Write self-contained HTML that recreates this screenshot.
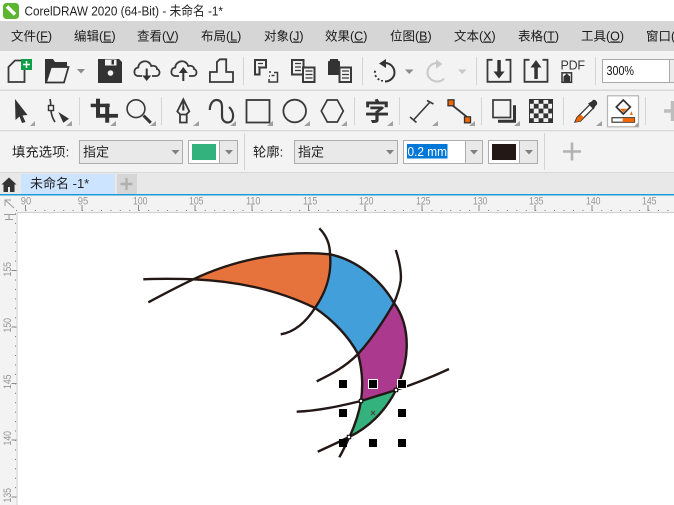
<!DOCTYPE html>
<html lang="zh-CN"><head><meta charset="utf-8"><title>CorelDRAW 2020</title>
<style>
html,body{margin:0;padding:0;width:674px;height:505px;overflow:hidden;background:#fff}
svg{display:block;position:absolute;left:0;top:0}
text{font-family:"Liberation Sans","Noto Sans CJK SC",sans-serif;fill:#1a1a1a}
.m{font-size:12.5px}
.r{font-size:11px;fill:#969696}
.i{fill:none;stroke:#3a3a3a;stroke-width:1.8}
.f{fill:#333}
.c{fill:#8a8a8a}
.s{stroke:#d4d4d4;stroke-width:1}
.d{fill:none;stroke:#231815;stroke-width:2.4;stroke-linecap:butt}
</style></head><body>
<svg width="674" height="505" viewBox="0 0 674 505" xmlns="http://www.w3.org/2000/svg">
<!-- backgrounds -->
<rect width="674" height="21" fill="#fff"/>
<rect y="21" width="674" height="30" fill="#d6d6d6"/>
<rect y="51" width="674" height="122" fill="#f3f3f3"/>
<rect y="89.500" width="674" height="1.500" fill="#d8d8d8"/>
<rect y="130" width="674" height="1.300" fill="#d8d8d8"/>
<rect y="172" width="674" height="1.200" fill="#d8d8d8"/>
<rect y="173" width="674" height="21" fill="#e8e8e8"/>
<rect y="194" width="674" height="1.500" fill="#1f9ad6"/>
<rect y="195.500" width="674" height="310" fill="#f3f3f3"/>
<rect x="17" y="213" width="657" height="292" fill="#fff"/>
<rect x="17" y="212" width="657" height="1" fill="#cfcfcf"/>
<rect x="16.500" y="213" width="1" height="292" fill="#cfcfcf"/>

<!-- title -->
<rect x="3" y="3" width="16" height="16" rx="3.500" fill="#5cb531"/>
<path d="M7 6.500l8 8" stroke="#fff" stroke-width="3.500"/>
<text x="24.500" y="15.500" font-size="13" textLength="198.500" lengthAdjust="spacingAndGlyphs" style="fill:#222">CorelDRAW 2020 (64-Bit) - 未命名 -1*</text>

<!-- menu -->
<g>
<text class="m" x="11" y="40.500">文件(<tspan text-decoration="underline">F</tspan>)</text>
<text class="m" x="74" y="40.500">编辑(<tspan text-decoration="underline">E</tspan>)</text>
<text class="m" x="137" y="40.500">查看(<tspan text-decoration="underline">V</tspan>)</text>
<text class="m" x="201" y="40.500">布局(<tspan text-decoration="underline">L</tspan>)</text>
<text class="m" x="264" y="40.500">对象(<tspan text-decoration="underline">J</tspan>)</text>
<text class="m" x="325" y="40.500">效果(<tspan text-decoration="underline">C</tspan>)</text>
<text class="m" x="390" y="40.500">位图(<tspan text-decoration="underline">B</tspan>)</text>
<text class="m" x="454" y="40.500">文本(<tspan text-decoration="underline">X</tspan>)</text>
<text class="m" x="518" y="40.500">表格(<tspan text-decoration="underline">T</tspan>)</text>
<text class="m" x="581" y="40.500">工具(<tspan text-decoration="underline">O</tspan>)</text>
<text class="m" x="646" y="40.500">窗口(W)</text>
</g>

<!-- toolbar 1 -->
<path class="i" d="M21 60.500h-6l-6.500 6.500V82H24.500V70"/>
<rect x="21" y="59" width="11" height="11" fill="#0d9e48"/>
<path d="M26.500 61v7M23 64.500h7" stroke="#fff" stroke-width="1.500"/>

<path class="f" d="M45 83V59h8l2 3H67v5H51L47.500 83z"/>
<path d="M46 82.500l5-15.500h17.500l-4.500 15.500z" fill="#f3f3f3" stroke="#333" stroke-width="1.700"/>
<path class="c" d="M77 69h8l-4 4.500z"/>

<path class="f" d="M98 59h21l3 3v21H98z"/>
<rect x="105" y="59.500" width="11.500" height="6" fill="#f3f3f3"/>
<rect x="111.500" y="60" width="2.500" height="4.500" fill="#333"/>
<circle cx="110.500" cy="73" r="2.800" fill="#f3f3f3"/>

<path class="i" d="M142 76h-3.500c-5.500 0-5.500-8-.3-8.500 .5-7 10.500-9 13-1.500 3.500-1 6 1 5.800 3 3.500 .8 3.500 7-1 7H152"/>
<path class="i" transform="translate(37 0)" d="M142 76h-3.500c-5.500 0-5.500-8-.3-8.500 .5-7 10.500-9 13-1.500 3.500-1 6 1 5.800 3 3.500 .8 3.500 7-1 7H152"/>
<path class="f" d="M145.700 68.500h2v7h3.500l-4.500 5.500-4.500-5.500h3.500z"/>
<path class="f" d="M182.300 81v-8h-3.500l4.500-6 4.500 6h-3.500v8z"/>
<path class="i" d="M209.900 72h7V62l3-2.700h6.300V72H233V82H209.900z"/>

<line class="s" x1="243.500" y1="57" x2="243.500" y2="85"/>
<g class="i">
<path d="M255 60h11v7.500h-6.500V74.500H255z" stroke-width="2"/><path d="M258 63.500h5M258 67h1.500" stroke-width="1.300"/>
<path d="M269 72h2M274 72.500h3.500V82h-8.500v-3M271.500 75.500h3M269 76h1" stroke-width="1.500"/>
<path d="M292 60h11.500v14.500H292z" stroke-width="2"/><path d="M295 63.500h6M295 67h6M295 70.500h6" stroke-width="1.200"/>
<rect x="303" y="67.500" width="11.500" height="14.500" fill="#f3f3f3" stroke-width="2"/><path d="M305.500 71h7M305.500 74.500h7M305.500 78h7" stroke-width="1.200"/>
</g>
<path class="f" d="M328 61.500l2-1v-1.500h8v1.500l2 1V75h-12z"/>
<rect x="339.500" y="67.500" width="11.500" height="14.500" fill="#f3f3f3" stroke="#3a3a3a" stroke-width="2"/>
<path d="M342 71h7M342 74.500h7M342 78h7" stroke="#3a3a3a" stroke-width="1.200"/>
<line class="s" x1="362.500" y1="57" x2="362.500" y2="85"/>

<path d="M385 63c5 0 9.500 4 9.500 9.500 0 5-4.500 9-9.500 9" fill="none" stroke="#333" stroke-width="2"/>
<path d="M374 71.500l1.800.5M375 76.500l1.500-1M378 80l1-1.500M382 81.500v-1.500" stroke="#333" stroke-width="2"/>
<path class="f" d="M379 63.500l7-4.500v9z"/>
<path class="c" d="M405 69.500h8.500l-4.250 4.500z"/>
<path d="M437 63c-5 0-9.500 4-9.500 9.500 0 5 4.500 9 9.500 9 3 0 5.500-1 7-3" fill="none" stroke="#c8c8c8" stroke-width="2"/>
<path d="M436 59.500l6.500 4.500-6.500 4.500z" fill="#c8c8c8"/>
<path d="M458 69.500h8.500l-4.250 4.500z" fill="#c8c8c8"/>
<line class="s" x1="476.500" y1="57" x2="476.500" y2="85"/>

<path class="i" d="M492.500 59.800h-5v22h23v-22h-5M529.500 59.800h-5v22h23v-22h-5"/>
<path class="f" d="M497.300 60h3.500v11.500h3.800L499 78.500 493.500 71.500h3.800z"/>
<path class="f" d="M534.300 79V67.500h-3.800L536 60l5.500 7.500h-3.700V79z"/>
<text x="560.500" y="69.500" font-size="12.500" textLength="24.500" style="fill:#3a3a3a">PDF</text>
<rect x="562" y="72.800" width="9.500" height="9.500" fill="none" stroke="#333" stroke-width="1.500"/>
<path class="f" d="M566.800 73.500l3.300 3v5h-6.600v-5z"/>
<line class="s" x1="595.500" y1="57" x2="595.500" y2="85"/>

<rect x="602.500" y="59.500" width="80" height="23" fill="#fff" stroke="#aaa"/>
<line x1="669.500" y1="60" x2="669.500" y2="82" stroke="#aaa"/>
<rect x="670" y="60" width="10" height="22" fill="#ececec"/>
<text x="606.500" y="75.200" font-size="12.500" textLength="27.500" lengthAdjust="spacingAndGlyphs" style="fill:#111">300%</text>

<!-- toolbar 2 -->
<path class="f" d="M15 99l12.500 16-5 .5 3 6.500-3.500 1-2.500-6.500-4 3.500z"/>
<g fill="#a0a0a0">
<path d="M30 126h5v-5z"/><path d="M66 126h6v-5z"/><path d="M110 126h6v-5z"/><path d="M150 126h6v-5z"/>
<path d="M193 126h6v-5z"/><path d="M230 126h6v-5z"/><path d="M267 126h6v-5z"/><path d="M304 126h6v-5z"/>
<path d="M341 126h6v-5z"/><path d="M387 126h6v-5z"/><path d="M432 126h6v-5z"/><path d="M469 126h6v-5z"/>
<path d="M514 126h6v-5z"/><path d="M596 126h6v-5z"/>
</g>
<path d="M50 99c.5 2 .8 3.500 .7 6M51 111c.5 4.500 2 8 4 11" fill="none" stroke="#333" stroke-width="1.600"/>
<rect x="48.500" y="105.500" width="5" height="5" fill="#f3f3f3" stroke="#333" stroke-width="1.400"/>
<path class="f" d="M58.300 112l10.700 6.700-5.700 4z"/>
<line class="s" x1="79.500" y1="97" x2="79.500" y2="125"/>

<g class="f">
<rect x="90.700" y="103.700" width="19" height="3.500"/>
<rect x="96" y="98.700" width="4" height="19"/>
<rect x="96" y="113.900" width="22" height="3.800"/>
<rect x="105.200" y="103.700" width="4" height="19"/>
</g>
<circle cx="136" cy="108.700" r="8.900" fill="none" stroke="#3a3a3a" stroke-width="1.600"/>
<path d="M143.500 115.500l7.300 7.300" stroke="#333" stroke-width="3"/>
<line class="s" x1="161.500" y1="97" x2="161.500" y2="125"/>

<path class="i" d="M183.300 99.300l6 12.200-3 3h-6l-3-3zM183.300 99.300v8M180 114.500h6.700v8H180z" stroke-width="1.700"/>
<path d="M183.300 106.500v4" stroke="#333" stroke-width="2.200"/>
<path d="M209.800 110c0-6 3-10 6.700-10 4 0 5.500 3 5.500 7v9c0 4 2.500 6.500 5.800 6.500 3.500 0 5.300-3 5.300-7 0-3-1.500-6-4-8.500" fill="none" stroke="#3a3a3a" stroke-width="2.200"/>
<rect x="246.500" y="100" width="23" height="22.500" fill="none" stroke="#3a3a3a" stroke-width="1.800"/>
<circle cx="294.700" cy="111" r="11.300" fill="none" stroke="#3a3a3a" stroke-width="1.800"/>
<path d="M327.300 100h10l6 11-6 11h-10l-6-11z" fill="none" stroke="#3a3a3a" stroke-width="1.700"/>
<line class="s" x1="354.500" y1="97" x2="354.500" y2="125"/>
<text x="364.500" y="120.500" font-size="25" font-weight="700" style="fill:#333;font-family:'Noto Sans CJK SC',sans-serif">字</text>
<line class="s" x1="399.500" y1="97" x2="399.500" y2="125"/>

<path d="M413.500 120L430.500 101.500M410 117l6.500 5.500M427 100.500l6.500 3.500" fill="none" stroke="#3a3a3a" stroke-width="1.600"/>
<path d="M452 105l15 12" stroke="#3a3a3a" stroke-width="1.800"/>
<rect x="448" y="99.800" width="6" height="6" fill="#f26600" stroke="#333" stroke-width="1.300"/>
<rect x="464.500" y="116.800" width="6" height="6" fill="#f26600" stroke="#333" stroke-width="1.300"/>
<line class="s" x1="481.500" y1="97" x2="481.500" y2="125"/>

<rect x="493" y="100" width="17.500" height="17.500" fill="none" stroke="#3a3a3a" stroke-width="1.700"/>
<path class="f" d="M513 105.300h3v17.400h-18v-3h15z"/>
<rect x="529" y="99" width="24" height="24" fill="#333"/>
<g fill="#f3f3f3">
<rect x="533.800" y="100" width="4.800" height="3.800"/><rect x="543.400" y="100" width="4.800" height="3.800"/>
<rect x="530" y="103.800" width="3.800" height="4.800"/><rect x="538.600" y="103.800" width="4.800" height="4.800"/><rect x="548.200" y="103.800" width="3.800" height="4.800"/>
<rect x="533.800" y="108.600" width="4.800" height="4.800"/><rect x="543.400" y="108.600" width="4.800" height="4.800"/>
<rect x="530" y="113.400" width="3.800" height="4.800"/><rect x="538.600" y="113.400" width="4.800" height="4.800"/><rect x="548.200" y="113.400" width="3.800" height="4.800"/>
<rect x="533.800" y="118.200" width="4.800" height="3.800"/><rect x="543.400" y="118.200" width="4.800" height="3.800"/>
</g>
<line class="s" x1="563.500" y1="97" x2="563.500" y2="125"/>

<path d="M575 122l2-4.500 13-13 3.500 3.500-13 13z" fill="#fff" stroke="#3a3a3a" stroke-width="1.300"/>
<path d="M575.300 122l2-4.500 3.500-3 3 3-3.500 3.500z" fill="#f26600"/>
<path class="f" d="M588 103.500l3.500-2 1.500-1.500c2-1 5 2 4 4.500l-1.500 1.500-2 3.500z"/>

<rect x="607.500" y="95.800" width="31" height="31" fill="#fff" stroke="#b5b5b5" stroke-width="1.200"/>
<path d="M623.300 100l7 7-7 7-7-7z" fill="#fff" stroke="#333" stroke-width="1.700"/>
<path d="M620 108.700h6.700l-3.350 3.500z" fill="#f26600"/>
<path d="M631.500 111l1.300 4h-2.800z" fill="#f26600"/>
<rect x="612" y="117.700" width="22.500" height="4.500" fill="#fff" stroke="#3a3a3a" stroke-width="1.200"/>
<rect x="622.700" y="118" width="11.700" height="4" fill="#f26600"/>
<path d="M634 126.500h4.500v-4.500z" fill="#a0a0a0"/>
<line class="s" x1="645.500" y1="97" x2="645.500" y2="125"/>
<path d="M672.500 101v20M664 111h10" stroke="#bdbdbd" stroke-width="3.500"/>

<!-- property bar -->
<text x="12" y="156.500" font-size="13.300" style="fill:#222;letter-spacing:.1px">填充选项:</text>
<rect x="79.500" y="140.500" width="103" height="23" fill="#e9e9e9" stroke="#adadad"/>
<text x="83" y="156.500" font-size="13" style="fill:#222">指定</text>
<path d="M171.500 150h8l-4 4.500z" fill="#808080"/>
<rect x="188.500" y="140.500" width="49" height="23" fill="#e9e9e9" stroke="#adadad"/>
<rect x="189" y="141" width="30" height="22" fill="#fff"/>
<rect x="192" y="144" width="24" height="16" fill="#34b27d"/>
<line x1="219.500" y1="141" x2="219.500" y2="163" stroke="#adadad"/>
<path d="M225 150h8l-4 4.500z" fill="#808080"/>
<line class="s" x1="244.500" y1="133" x2="244.500" y2="170"/>
<text x="253" y="156.500" font-size="13.300" style="fill:#222">轮廓:</text>
<rect x="294.500" y="140.500" width="103" height="23" fill="#e9e9e9" stroke="#adadad"/>
<text x="298" y="156.500" font-size="13" style="fill:#222">指定</text>
<path d="M386 150h8l-4 4.500z" fill="#808080"/>
<rect x="403.500" y="140.500" width="79" height="23" fill="#e9e9e9" stroke="#adadad"/>
<rect x="404" y="141" width="61" height="22" fill="#fff"/>
<rect x="407" y="144" width="40.500" height="14.500" fill="#0078d7"/>
<text x="407.500" y="155.800" font-size="12.500" textLength="39.500" lengthAdjust="spacingAndGlyphs" style="fill:#fff">0.2 mm</text>
<line x1="465.500" y1="141" x2="465.500" y2="163" stroke="#adadad"/>
<path d="M470 150h8l-4 4.500z" fill="#808080"/>
<rect x="488.500" y="140.500" width="49" height="23" fill="#e9e9e9" stroke="#adadad"/>
<rect x="489" y="141" width="30" height="22" fill="#fff"/>
<rect x="492" y="144" width="24" height="16" fill="#231815"/>
<line x1="519.500" y1="141" x2="519.500" y2="163" stroke="#adadad"/>
<path d="M525 150h8l-4 4.500z" fill="#808080"/>
<line class="s" x1="544.500" y1="133" x2="544.500" y2="170"/>
<path d="M572 142.500v18M563 151.500h18" stroke="#b3b3b3" stroke-width="2.600"/>

<!-- tabs -->
<path d="M1.500 184.500l7.500-7 7.500 7h-2V192h-4.500v-5h-2v5H3.500v-7.500z" fill="#333"/>
<rect x="21" y="174" width="94" height="20" fill="#cce4ff"/>
<text x="30" y="188" font-size="13" style="fill:#222">未命名 -1*</text>
<rect x="117" y="174" width="20" height="20" fill="#d6d6d6"/>
<path d="M126.500 178v12M120.500 184h12" stroke="#b0b0b0" stroke-width="2.400"/>

<!-- rulers -->
<g>
<text class="r" x="20.800" y="204.500" textLength="10.500" lengthAdjust="spacingAndGlyphs">90</text>
<text class="r" x="77.800" y="204.500" textLength="10.500" lengthAdjust="spacingAndGlyphs">95</text>
<text class="r" x="133" y="204.500" textLength="14.500" lengthAdjust="spacingAndGlyphs">100</text>
<text class="r" x="189" y="204.500" textLength="14.500" lengthAdjust="spacingAndGlyphs">105</text>
<text class="r" x="246" y="204.500" textLength="14.500" lengthAdjust="spacingAndGlyphs">110</text>
<text class="r" x="303" y="204.500" textLength="14.500" lengthAdjust="spacingAndGlyphs">115</text>
<text class="r" x="359" y="204.500" textLength="14.500" lengthAdjust="spacingAndGlyphs">120</text>
<text class="r" x="416" y="204.500" textLength="14.500" lengthAdjust="spacingAndGlyphs">125</text>
<text class="r" x="473" y="204.500" textLength="14.500" lengthAdjust="spacingAndGlyphs">130</text>
<text class="r" x="529" y="204.500" textLength="14.500" lengthAdjust="spacingAndGlyphs">135</text>
<text class="r" x="586" y="204.500" textLength="14.500" lengthAdjust="spacingAndGlyphs">140</text>
<text class="r" x="642" y="204.500" textLength="14.500" lengthAdjust="spacingAndGlyphs">145</text>
<text class="r" transform="translate(11 276.500) rotate(-90)" textLength="14.500" lengthAdjust="spacingAndGlyphs">155</text>
<text class="r" transform="translate(11 332.500) rotate(-90)" textLength="14.500" lengthAdjust="spacingAndGlyphs">150</text>
<text class="r" transform="translate(11 389) rotate(-90)" textLength="14.500" lengthAdjust="spacingAndGlyphs">145</text>
<text class="r" transform="translate(11 445.500) rotate(-90)" textLength="14.500" lengthAdjust="spacingAndGlyphs">140</text>
<text class="r" transform="translate(11 502.500) rotate(-90)" textLength="14.500" lengthAdjust="spacingAndGlyphs">135</text>
</g>
<line x1="16" y1="210.500" x2="674" y2="210.500" stroke="#777" stroke-dasharray="1 8.440"/>
<path d="M25.500 205v6M82 205v6M138.500 205v6M195 205v6M252 205v6M308.500 205v6M365 205v6M422 205v6M479 205v6M535 205v6M592 205v6M648 205v6" stroke="#8a8a8a"/>
<line x1="15.500" y1="213.400" x2="15.500" y2="505" stroke="#777" stroke-dasharray="1 8.440"/>
<path d="M11.500 270.500h5M11.500 327h5M11.500 383.500h5M11.500 440h5M11.500 497h5" stroke="#8a8a8a"/>
<path d="M5 200l9 8M5 206v-6h6M4 214.500h12M5 219.500h8M9 214.500v5" fill="none" stroke="#9a9a9a" stroke-width="1"/>

<!-- drawing -->
<path d="M193.300 279.300C236 259 285 250 330 254.300 332 275 326 292 315 308 278 290 236 281 193.300 279.300z" fill="#e6733c"/>
<path d="M330 254.300C357 260 381 280 394 303 383 322 371 340 358 354 349 337 333 320 315 308 326 292 332 275 330 254.300z" fill="#429fd9"/>
<path d="M394 303C405 318 407 334 406.700 347 406.500 362 402 377 396 390L361 401C363.500 383 362 368 358 354 371 340 383 322 394 303z" fill="#ab3a8f"/>
<path d="M361 401L396 390C385 412 368 428 349 437 355 425 359 413 361 401z" fill="#34b27d"/>
<g class="d">
<path d="M143.300 279.300C160 278.500 177 278.700 193.300 279.300 236 281 278 290 315 308 333 320 349 337 358 354 362 368 363.500 383 361 401 359 413 355 425 349.500 437 346 444 343 451 339.300 457.300"/>
<path d="M148.300 302.300C162 295 177 287 193.300 279.300 236 259 285 250 330 254.300 357 260 381 280 394 303 405 318 407 334 406.700 347 406.500 362 402 377 396 390 385 412 368 428 349 437 338 442.500 328 447 317.700 451.700"/>
<path d="M319.300 228.300C327 236 330 245 330 254.300 332 275 326 292 315 308 306 322 295 332 280.700 334.300"/>
<path d="M395.700 250C400 262 401.500 274 400.700 281 399.500 289 397 296 394 303 383 322 371 340 358 354 345 367 332 374 316.700 381.300"/>
<path d="M296.700 411.700C318 411 340 406 361 401L396 390C414 384 432 377 449 369"/>
</g>
<!-- handles -->
<g fill="#000">
<rect x="339" y="380" width="8" height="8"/>
<rect x="368.500" y="379.500" width="9" height="9" stroke="#fff"/>
<rect x="397.500" y="379.500" width="9" height="9" stroke="#fff"/>
<rect x="339" y="409" width="8" height="8"/>
<rect x="398" y="409" width="8" height="8"/>
<rect x="339" y="439" width="8" height="8"/>
<rect x="369" y="439" width="8" height="8"/>
<rect x="398" y="439" width="8" height="8"/>
</g>
<g fill="#fff" stroke="#000" stroke-width="1">
<rect x="359.300" y="399.300" width="3.400" height="3.400"/>
<rect x="394.300" y="388.300" width="3.400" height="3.400"/>
<rect x="347.300" y="435.300" width="3.400" height="3.400"/>
</g>
<path d="M371 411l4 4M375 411l-4 4" stroke="#444" stroke-width="1.100"/>
</svg>
</body></html>
